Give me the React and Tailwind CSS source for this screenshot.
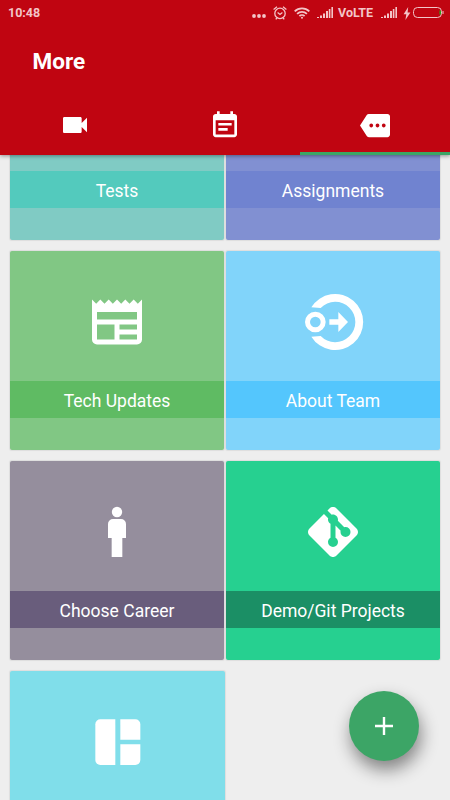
import React, { useState } from 'react';

const TABS = [
  {
    id: 'videos',
    size: 'w-8 h-8',
    path: 'M17 10.5V7c0-.55-.45-1-1-1H4c-.55 0-1 .45-1 1v10c0 .55.45 1 1 1h12c.55 0 1-.45 1-1v-3.5l4 4v-11l-4 4z',
  },
  {
    id: 'events',
    size: 'w-8 h-[31px]',
    path: 'M17 10H7v2h10v-2zm2-7h-1V1h-2v2H8V1H6v2H5c-1.11 0-1.99.9-1.99 2L3 19c0 1.1.89 2 2 2h14c1.1 0 2-.9 2-2V5c0-1.1-.9-2-2-2zm0 16H5V8h14v11zm-5-5H7v2h7v-2z',
  },
  {
    id: 'more',
    size: 'w-[30px] h-[31px]',
    path: 'M22 3H7c-.69 0-1.23.35-1.59.88L0 12l5.41 8.11c.36.53.97.89 1.66.89H22c1.1 0 2-.9 2-2V5c0-1.1-.9-2-2-2zM9 13.5c-.83 0-1.5-.67-1.5-1.5s.67-1.5 1.5-1.5 1.5.67 1.5 1.5-.67 1.5-1.5 1.5zm5 0c-.83 0-1.5-.67-1.5-1.5s.67-1.5 1.5-1.5 1.5.67 1.5 1.5-.67 1.5-1.5 1.5zm5 0c-.83 0-1.5-.67-1.5-1.5s.67-1.5 1.5-1.5 1.5.67 1.5 1.5-.67 1.5-1.5 1.5z',
  },
];

const NewspaperIcon = () => (
  <svg viewBox="0 0 24 24" className="w-[60px] h-[60px]" fill="currentColor">
    <path d="M20,11H4V8H20M20,15H13V13H20M20,19H13V17H20M11,19H4V13H11M20.33,4.67L18.67,3L17,4.67L15.33,3L13.67,4.67L12,3L10.33,4.67L8.67,3L7,4.67L5.33,3L3.67,4.67L2,3V19A2,2 0 0,0 4,21H20A2,2 0 0,0 22,19V3L20.33,4.67Z" />
  </svg>
);

const TeamIcon = () => (
  <svg viewBox="24 21 180 180" className="w-[60px] h-[60px] overflow-visible" fill="currentColor">
    <path d="M49 67A84 84 0 1 1 49 155L77 153A60.5 60.5 0 1 0 77 69Z" />
    <circle cx="61" cy="111" r="23.5" fill="none" stroke="currentColor" strokeWidth="15" />
    <path d="M103 103H130V81L159 111L130 141V119H103Z" />
  </svg>
);

const PersonIcon = () => (
  <svg viewBox="21 21 180 180" className="w-[60px] h-[60px]" fill="currentColor">
    <circle cx="111" cy="51" r="15.5" />
    <path d="M99 72H123A15 15 0 0 1 138 87V129H127V186H95V129H84V87A15 15 0 0 1 99 72Z" />
  </svg>
);

const GitIcon = () => (
  <svg viewBox="0 0 24 24" className="w-[60px] h-[60px]" fill="currentColor">
    <path d="M2.6,10.59L8.38,4.8L10.07,6.5C9.83,7.35 10.22,8.28 11,8.73V14.27C10.4,14.61 10,15.26 10,16A2,2 0 0,0 12,18A2,2 0 0,0 14,16C14,15.26 13.6,14.61 13,14.27V9.41L15.07,11.5C15,11.65 15,11.82 15,12A2,2 0 0,0 17,14A2,2 0 0,0 19,12A2,2 0 0,0 17,10C16.82,10 16.65,10 16.5,10.07L13.93,7.5C14.19,6.57 13.71,5.55 12.78,5.16C12.35,5 11.9,4.96 11.5,5.07L9.8,3.38L10.59,2.6C11.37,1.81 12.63,1.81 13.41,2.6L21.4,10.59C22.19,11.37 22.19,12.63 21.4,13.41L13.41,21.4C12.63,22.19 11.37,22.19 10.59,21.4L2.6,13.41C1.81,12.63 1.81,11.37 2.6,10.59Z" />
  </svg>
);

const BoardIcon = () => (
  <svg viewBox="23 21 180 180" className="w-[60px] h-[60px]" fill="currentColor">
    <path d="M60 43H105V180H60A15 15 0 0 1 45 165V58A15 15 0 0 1 60 43Z" />
    <path d="M120 43H165A15 15 0 0 1 180 58V104H120Z" />
    <path d="M120 118H180V165A15 15 0 0 1 165 180H120Z" />
  </svg>
);

const CARDS = [
  { label: 'Tests', card: 'bg-[#80cbc4]', band: 'bg-[#53cabd]' },
  { label: 'Assignments', card: 'bg-[#8190d2]', band: 'bg-[#7083d0]' },
  { label: 'Tech Updates', card: 'bg-[#81c784]', band: 'bg-[#5fbb63]', icon: NewspaperIcon },
  { label: 'About Team', card: 'bg-[#81d4fa]', band: 'bg-[#54c6fd]', icon: TeamIcon },
  { label: 'Choose Career', card: 'bg-[#958e9d]', band: 'bg-[#695d7c]', icon: PersonIcon },
  { label: 'Demo/Git Projects', card: 'bg-[#26d090]', band: 'bg-[#1b8f65]', icon: GitIcon },
  { card: 'bg-[#80deea] -mr-px', icon: BoardIcon },
];

function Signal() {
  return (
    <svg viewBox="0 0 16 12" className="w-4 h-3" fill="currentColor">
      <path d="M0 10h2v1H0zM3 8.5h2V11H3zM6 6.5h2V11H6zM9 4h2v7H9zM11.8 2h1.6v9h-1.6zM14.4 0H16v11h-1.6z" />
    </svg>
  );
}

function StatusBar() {
  return (
    <div className="flex h-[26px] items-center pl-2 pr-[6px] text-[#f3c5c8]">
      <span className="text-[12.5px] font-bold leading-none">10:48</span>
      <svg viewBox="0 0 14 4" className="ml-auto mt-[6px] h-1 w-[14px]" fill="currentColor">
        <circle cx="2" cy="2" r="1.9" />
        <circle cx="7" cy="2" r="1.9" />
        <circle cx="12" cy="2" r="1.9" />
      </svg>
      <svg viewBox="0 0 14 14" className="ml-[7px] h-[14px] w-[14px]" fill="none" stroke="currentColor" strokeWidth="1.3">
        <circle cx="7" cy="7.4" r="5.2" />
        <path d="M.6 3.4L4 .8M10 .8l3.4 2.6M2.8 13.3l1-1.3M11.2 13.3l-1-1.3M4.6 6.6L7 8.4l2.4-1.8" />
      </svg>
      <svg viewBox="0 0 16 12" className="ml-[7px] h-3 w-4" fill="none" stroke="currentColor" strokeWidth="1.8">
        <path d="M.7 4.3a10.5 10.5 0 0 1 14.6 0M3.1 6.8a7 7 0 0 1 9.8 0M5.4 9.1a3.7 3.7 0 0 1 5.2 0" />
        <circle cx="8" cy="10.8" r="1" fill="currentColor" stroke="none" />
      </svg>
      <div className="ml-[7px] flex"><Signal /></div>
      <span className="ml-[5px] w-9 text-[12.5px] font-bold leading-none">VoLTE</span>
      <div className="ml-[7px] flex"><Signal /></div>
      <svg viewBox="0 0 8 13" className="ml-[6px] h-[13px] w-2" fill="currentColor">
        <path d="M5.2 0L.6 7.2h2.7L2.4 13l5-7.6H4.6z" />
      </svg>
      <svg viewBox="0 0 31 12" className="ml-[2px] h-3 w-[31px]" fill="none" stroke="currentColor">
        <rect x=".5" y=".5" width="28" height="10" rx="4" />
        <path d="M30 4v3" />
        <path d="M27.2 3.5v4" stroke="#19b319" strokeWidth="1.4" />
      </svg>
    </div>
  );
}

function Card({ label, card, band, icon: Icon }) {
  return (
    <div className={`flex h-[199px] flex-col rounded-[2px] shadow-[0_0_1px_1px_rgba(0,0,0,0.07)] ${card}`}>
      <div className="flex h-[130px] shrink-0 items-center justify-center pt-3 text-white">
        {Icon && <Icon />}
      </div>
      {label && (
        <div className={`flex h-[37px] items-center justify-center pt-[3px] text-[17.5px] text-white ${band}`}>
          {label}
        </div>
      )}
    </div>
  );
}

export default function App() {
  const [activeTab, setActiveTab] = useState('more');

  return (
    <div className="relative flex h-[800px] w-[450px] flex-col overflow-hidden bg-[#eeeeee] font-['Roboto',sans-serif]">
      {/* Header */}
      <header className="relative z-10 flex h-[155px] shrink-0 flex-col bg-[#c00511] shadow-[0_1px_4px_rgba(0,0,0,0.4)]">
        <StatusBar />
        <h1 className="flex h-[69px] items-center pl-[32.5px] pt-[2px] text-[22.5px] font-bold text-white">More</h1>
        <nav className="grid flex-1 grid-cols-3">
          {TABS.map((tab) => (
            <button
              key={tab.id}
              onClick={() => setActiveTab(tab.id)}
              className={`flex items-center justify-center border-b-[3px] pt-[3px] text-white ${
                activeTab === tab.id ? 'border-[#3ca566]' : 'border-transparent'
              }`}
            >
              <svg viewBox="0 0 24 24" className={tab.size} preserveAspectRatio="none" fill="currentColor">
                <path d={tab.path} />
              </svg>
            </button>
          ))}
        </nav>
      </header>

      {/* Card grid, scrolled part way down */}
      <main className="h-[645px] overflow-hidden">
        <div className="-mt-[114px] grid grid-cols-2 gap-x-[2px] gap-y-[11px] px-[10px]">
          {CARDS.map((item, index) => (
            <Card key={index} {...item} />
          ))}
        </div>
      </main>

      {/* Floating button */}
      <button className="absolute left-[349px] top-[691px] z-20 flex h-[70px] w-[70px] items-center justify-center rounded-full bg-[#3ca566] text-white shadow-[2px_9px_17px_rgba(0,0,0,0.45)]">
        <svg viewBox="0 0 18 18" className="h-[18px] w-[18px]" stroke="currentColor" strokeWidth="2.4">
          <path d="M9 0v18M0 9h18" />
        </svg>
      </button>
    </div>
  );
}
